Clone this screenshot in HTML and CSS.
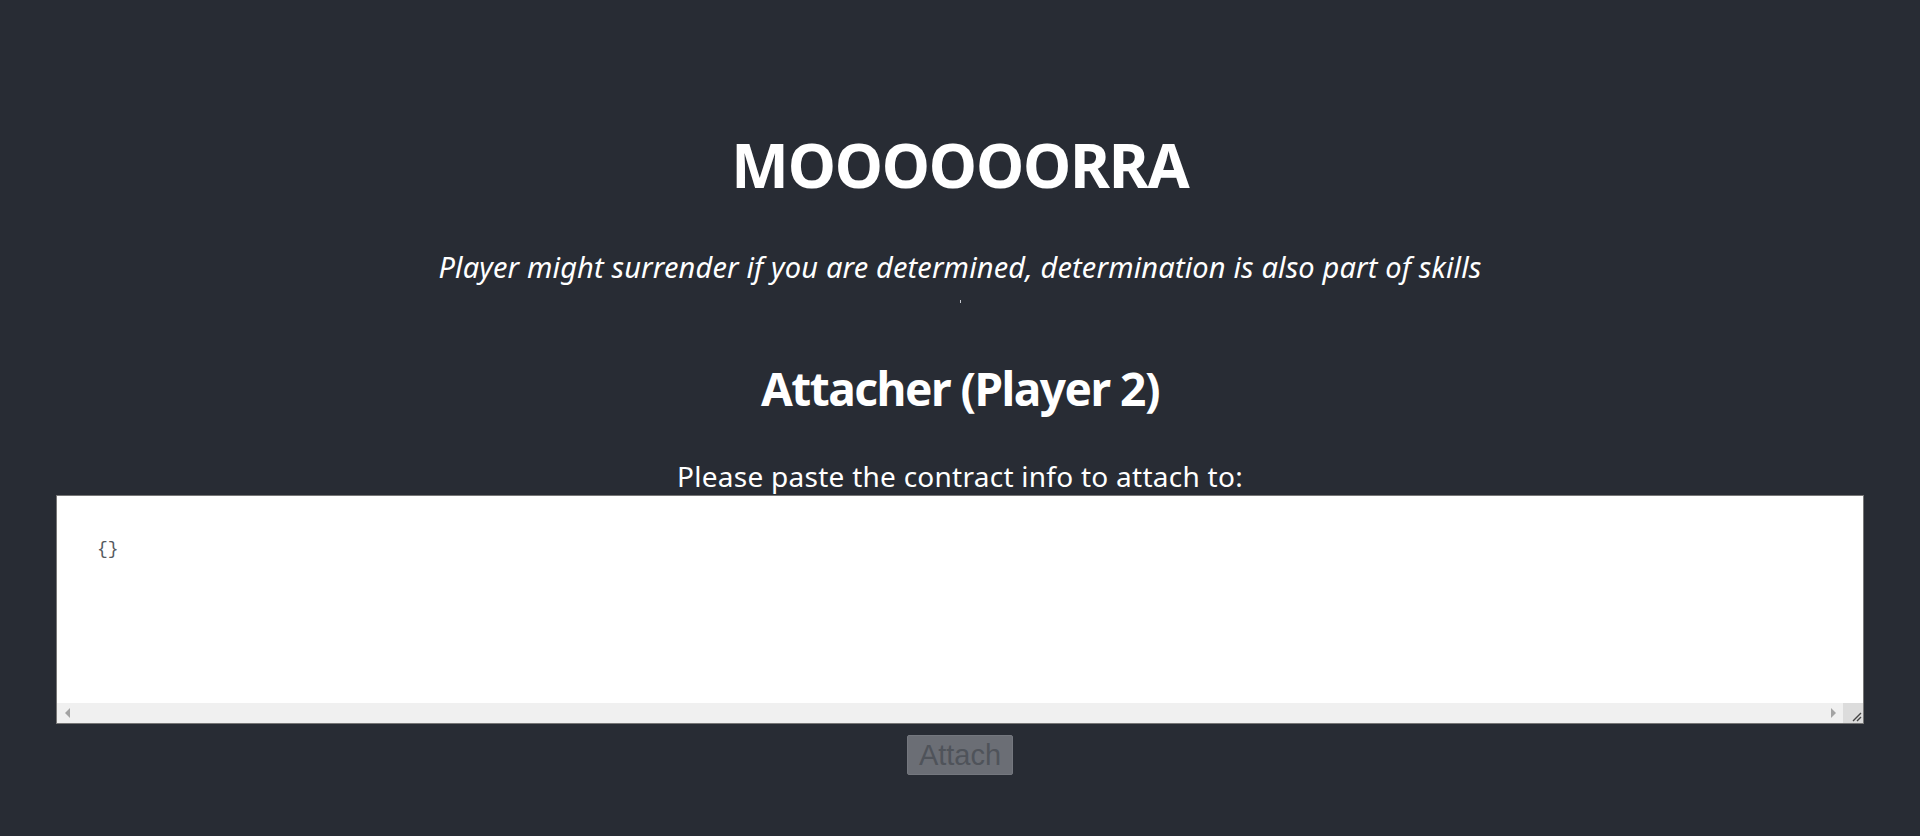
FILE: index.html
```html
<!DOCTYPE html>
<html lang="en">
<head>
<meta charset="utf-8">
<title>MOOOOOORRA</title>
<link rel="stylesheet" href="styles.css">
</head>
<body>
<div class="app">
  <header class="app-header">
    <h1 class="title">MOOOOOORRA</h1>
    <p class="tagline">Player might surrender if you are determined, determination is also part of skills</p>
    <span class="dot"></span>
    <h2 class="role">Attacher (Player 2)</h2>
    <p class="prompt">Please paste the contract info to attach to:</p>
    <div class="editor">
      <textarea class="contract" wrap="off" spellcheck="false">{}</textarea>
      <div class="hscroll">
        <span class="arrow arrow-left"></span>
        <span class="track"></span>
        <span class="arrow arrow-right"></span>
        <span class="corner">
          <svg width="20" height="20" viewBox="0 0 20 20"><path d="M10 18 L18 10 M14 18 L18 14" stroke="#444" stroke-width="1.4" fill="none"/></svg>
        </span>
      </div>
    </div>
    <button class="attach" disabled>Attach</button>
  </header>
</div>
</body>
</html>
```
FILE: styles.css
```css
html, body {
  margin: 0;
  padding: 0;
  background: #282c34;
}
.app {
  text-align: center;
}
.app-header {
  min-height: 836px;
  box-sizing: border-box;
  padding-top: 134px;
  display: flex;
  flex-direction: column;
  align-items: center;
  color: #ffffff;
  font-family: "Noto Sans", "Open Sans", sans-serif;
}
.title {
  margin: 0;
  font-size: 61px;
  line-height: 61px;
  font-weight: 700;
  letter-spacing: -1.2px;
}
.tagline {
  margin: 57px 0 0;
  font-size: 29px;
  line-height: 29px;
  font-style: italic;
  letter-spacing: 0.15px;
}
.dot {
  display: block;
  width: 1px;
  height: 3px;
  margin-top: 19px;
  background: #c4c8ce;
}
.role {
  margin: 62px 0 0;
  font-size: 46px;
  line-height: 46px;
  font-weight: 700;
  letter-spacing: -1.5px;
}
.prompt {
  margin: 51px 0 0;
  font-size: 28px;
  line-height: 28px;
  letter-spacing: 0.26px;
}
.editor {
  margin-top: 5px;
  align-self: stretch;
  margin-left: 56px;
  margin-right: 56px;
  border: 1px solid #767676;
  background: #ffffff;
  display: flex;
  flex-direction: column;
}
.contract {
  display: block;
  height: 207px;
  box-sizing: border-box;
  padding: 43px 40px;
  border: none;
  outline: none;
  resize: none;
  overflow: hidden;
  font-family: "Liberation Mono", monospace;
  font-size: 18px;
  line-height: 20px;
  color: #555a61;
  background: #ffffff;
}
.hscroll {
  display: flex;
  height: 20px;
  background: #f0f0f0;
}
.arrow {
  width: 20px;
  height: 20px;
  display: flex;
  align-items: center;
  justify-content: center;
}
.arrow::before {
  content: "";
  width: 0;
  height: 0;
  border-top: 5px solid transparent;
  border-bottom: 5px solid transparent;
}
.arrow-left::before {
  border-right: 5px solid #a3a3a3;
}
.arrow-right::before {
  border-left: 5px solid #a3a3a3;
}
.track {
  flex: 1;
}
.corner {
  width: 20px;
  height: 20px;
  background: #dcdcdc;
  display: block;
}
.corner svg {
  display: block;
}
.attach {
  margin-top: 11px;
  height: 40px;
  padding: 0 11px;
  font-family: "Liberation Sans", Arial, sans-serif;
  font-size: 29px;
  line-height: 38px;
  color: #4f535a;
  background: #6b6e75;
  border: 1px solid #74777e;
  border-radius: 2px;
}
```
